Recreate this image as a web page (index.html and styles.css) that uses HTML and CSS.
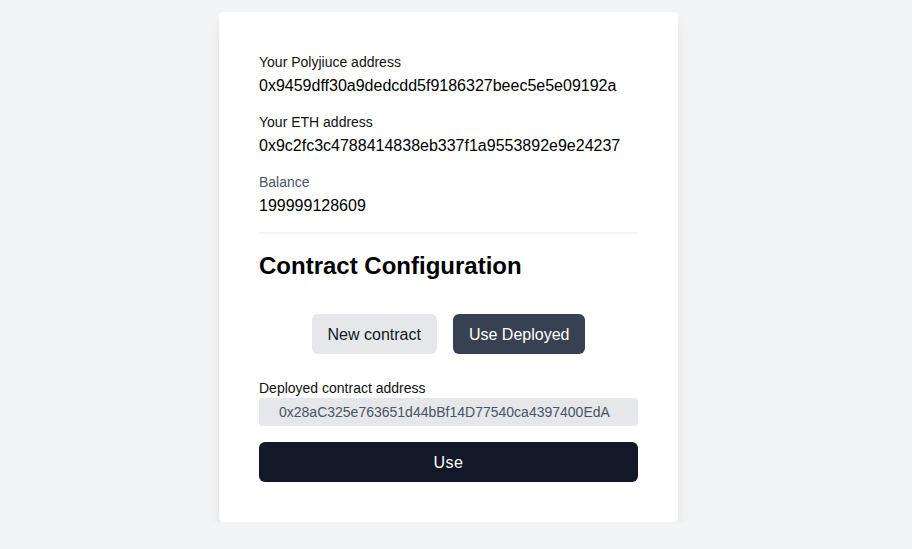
FILE: index.html
```html
<!DOCTYPE html>
<html>
<head>
<meta charset="utf-8">
<link rel="stylesheet" href="styles.css">
</head>
<body>
<div class="page">
  <div class="card">
    <div class="field">
      <div class="label">Your Polyjiuce address</div>
      <div class="value">0x9459dff30a9dedcdd5f9186327beec5e5e09192a</div>
    </div>
    <div class="field">
      <div class="label">Your ETH address</div>
      <div class="value">0x9c2fc3c4788414838eb337f1a9553892e9e24237</div>
    </div>
    <div class="field">
      <div class="label muted">Balance</div>
      <div class="value">199999128609</div>
    </div>
    <hr class="divider">
    <h2 class="heading">Contract Configuration</h2>
    <div class="toggle">
      <button class="btn btn-light">New contract</button>
      <button class="btn btn-dark">Use Deployed</button>
    </div>
    <div class="label">Deployed contract address</div>
    <input class="address" type="text" value="0x28aC325e763651d44bBf14D77540ca4397400EdA">
    <button class="btn btn-use">Use</button>
  </div>
</div>
</body>
</html>
```
FILE: styles.css
```css
* { box-sizing: border-box; }
html, body {
  margin: 0;
  padding: 0;
  background: #f3f4f6;
  font-family: "Liberation Sans", Arial, sans-serif;
  color: #000;
}
.page {
  display: flex;
  justify-content: center;
  padding: 12px 15px 0 0;
}
.card {
  width: 459px;
  background: #fff;
  border-radius: 4px;
  padding: 40px 40px 40px 40px;
  box-shadow: 0 10px 15px -3px rgba(0,0,0,0.1), 0 4px 6px -2px rgba(0,0,0,0.05);
  display: flex;
  flex-direction: column;
}
.field { margin-bottom: 14px; }
.field .label { margin-bottom: 2px; }
.label {
  font-size: 14px;
  line-height: 20px;
  color: #111;
}
.label.muted { color: #4b5563; }
.value {
  font-size: 16px;
  line-height: 24px;
}
.divider {
  border: 0;
  height: 2px;
  background: #f3f4f6;
  margin: 0 0 16px 0;
}
.heading {
  margin: 0 0 32px 0;
  font-size: 24px;
  line-height: 32px;
  font-weight: 700;
}
.toggle {
  display: flex;
  justify-content: center;
  gap: 16px;
  margin-bottom: 24px;
}
.btn {
  font-family: "Liberation Sans", Arial, sans-serif;
  font-size: 16px;
  line-height: 24px;
  height: 40px;
  border: 0;
  border-radius: 6px;
  padding: 9px 16px 7px;
  cursor: pointer;
}
.btn-light { background: #e5e7eb; color: #111827; }
.btn-dark { background: #374151; color: #fff; }
.address {
  height: 28px;
  border: 0;
  border-radius: 4px;
  background: #e5e7eb;
  color: #4b5563;
  font-family: "Liberation Sans", Arial, sans-serif;
  font-size: 14px;
  padding: 0 20px;
  margin-bottom: 16px;
  width: 100%;
}
.btn-use {
  width: 100%;
  background: #111827;
  color: #fff;
  letter-spacing: 0.5px;
}
```
